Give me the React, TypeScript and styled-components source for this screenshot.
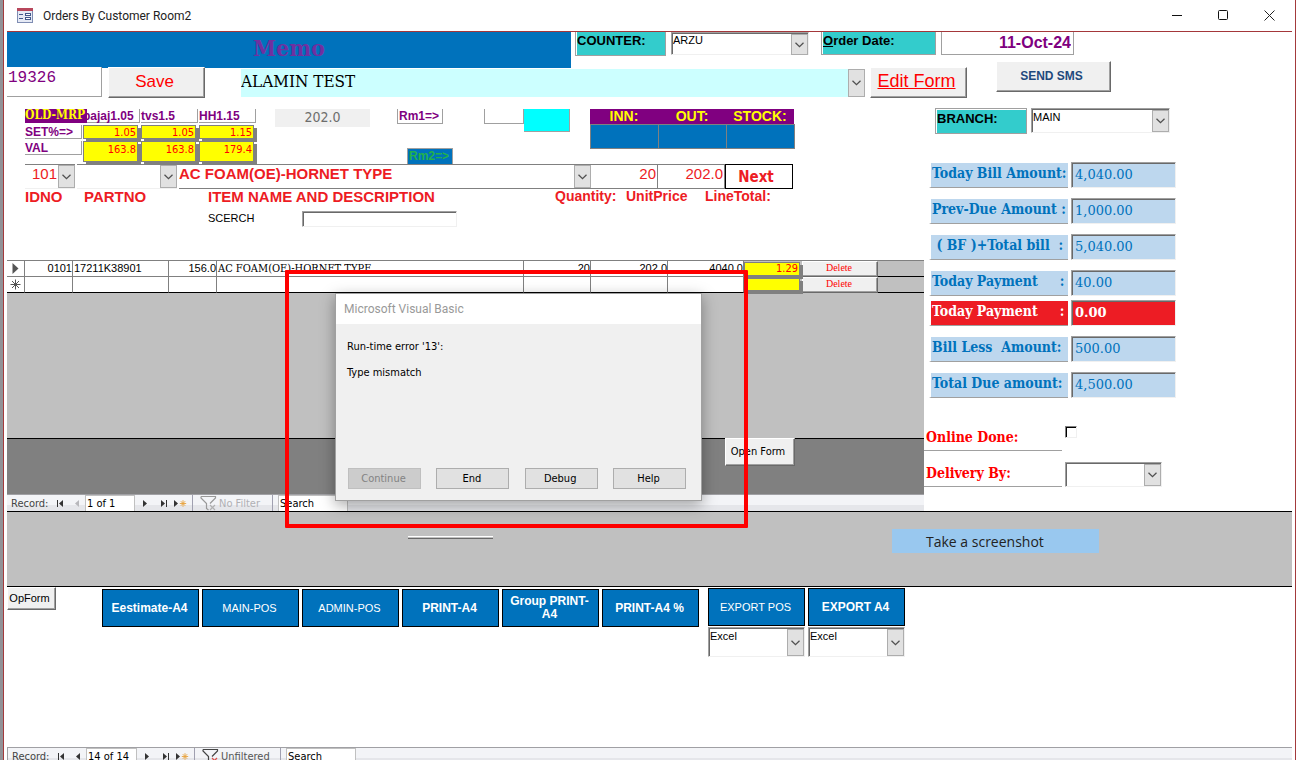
import React from "react";
import styled, { createGlobalStyle, css } from "styled-components";

const SANS = `"Liberation Sans", Arial, sans-serif`;
const TAHOMA = `"DejaVu Sans Condensed", "DejaVu Sans", Tahoma, sans-serif`;
const SEGOE = `"Open Sans", "Segoe UI", sans-serif`;
const CAPTION = `Roboto, "Segoe UI", sans-serif`;
const CAMBRIA = `"DejaVu Serif Condensed", "DejaVu Serif", Cambria, serif`;
const SERIF_WIDE = `"DejaVu Serif", Cambria, serif`;
const MONO = `"Liberation Mono", "Courier New", monospace`;

const BLUE = "#0072bc";
const PURPLE = "#800080";
const RED = "#ed1c24";
const TEAL = "#33cccc";

const GlobalStyle = createGlobalStyle`
  * { box-sizing: border-box; }
  html, body { margin: 0; background: #fff; overflow: hidden; }
  body { font-family: ${SANS}; font-size: 11px; color: #000; }
  button, input, select { font: inherit; color: inherit; margin: 0; border-radius: 0; }
  h1, p { margin: 0; font-weight: inherit; }
`;

/* ---------- window shell ---------- */

const Shell = styled.div`
  position: relative;
  min-height: 100vh;
  display: flex;
  flex-direction: column;
  background: #fff;
  border-left: 3px solid #929297;
  border-right: 1px solid #fff;
  padding: 0 4px;
  box-shadow: inset 1px 0 0 #a33a3c, inset -1px 0 0 #a33a3c;
`;

const TitleBar = styled.header`
  display: flex;
  align-items: center;
  height: 32px;
  padding: 0 11px 0 10px;
  border-bottom: 1px solid #a4373a;
  color: #222;
`;

const TitleText = styled.h1`
  flex: 1;
  margin-left: 10px;
  font: 12px ${CAPTION};
`;

const Caption = styled.button`
  width: 46px;
  height: 30px;
  padding: 0;
  border: 0;
  background: none;
  display: grid;
  place-items: center;
  &:last-child { width: 24px; }
  &:nth-last-child(2) { margin-right: 11px; }
`;

/* ---------- shared controls ---------- */

const sunken = css`
  border: 1px solid #f0f0f0;
  border-top-color: #a0a0a0;
  border-left-color: #a0a0a0;
  box-shadow: inset 1px 1px 0 #696969;
`;

const raised = css`
  background: #f0f0f0;
  border: 1px solid #fff;
  border-right-color: #696969;
  border-bottom-color: #696969;
  box-shadow: inset -1px -1px 0 #a0a0a0;
`;

const RaisedButton = styled.button<{ $w: number; $h: number; $size?: number; $color?: string; $bold?: boolean; $underline?: boolean; $tahoma?: boolean }>`
  ${raised}
  flex: none;
  width: ${p => p.$w}px;
  height: ${p => p.$h}px;
  padding: 0 4px 2px 0;
  white-space: nowrap;
  font-family: ${p => (p.$tahoma ? TAHOMA : SANS)};
  font-size: ${p => p.$size ?? 11}px;
  font-weight: ${p => (p.$bold ? "bold" : "normal")};
  color: ${p => p.$color ?? "#000"};
  text-decoration: ${p => (p.$underline ? "underline" : "none")};
`;

const ComboBox = styled.div<{ $w: number; $h: number; $flat?: boolean; $bg?: string; $lift?: number }>`
  flex: none;
  display: grid;
  width: ${p => p.$w}px;
  height: ${p => p.$h}px;
  padding: ${p => (p.$flat ? "0" : "1px 0 0 1px")};
  background: ${p => p.$bg ?? "#fff"};
  ${p => !p.$flat && sunken}
  > * { grid-area: 1 / 1; }
  select {
    appearance: none;
    min-width: 0;
    width: 100%;
    height: 100%;
    border: 0;
    outline: 0;
    background: transparent;
    padding: 0 18px ${p => p.$lift ?? 0}px 0;
  }
`;

const ComboArrow = styled.span`
  justify-self: end;
  width: 17px;
  height: 100%;
  display: grid;
  place-items: center;
  background: #e1e1e1;
  border: 1px solid #adadad;
  pointer-events: none;
`;

type ComboProps = { label: string; value: string; w: number; h: number; flat?: boolean; bg?: string; lift?: number; className?: string };

function Combo({ label, value, w, h, flat, bg, lift, className }: ComboProps) {
  return (
    <ComboBox $w={w} $h={h} $flat={flat} $bg={bg} $lift={lift} className={className}>
      <select aria-label={label} defaultValue={value}>
        <option value={value}>{value}</option>
      </select>
      <ComboArrow>
        <svg width="9" height="6" viewBox="0 0 9 6">
          <path d="M0.5 0.8 L4.5 4.6 L8.5 0.8" fill="none" stroke="#505050" strokeWidth="1.3" />
        </svg>
      </ComboArrow>
    </ComboBox>
  );
}

/* ---------- form header ---------- */

const TopRow = styled.div`
  display: flex;
  height: 36px;
  align-items: flex-start;
`;

const SecondRow = styled.div`
  display: flex;
  align-items: flex-end;
  height: 37px;
  margin-top: -7px;
`;

const Memo = styled.div`
  width: 564px;
  height: 36px;
  text-align: center;
  background: ${BLUE};
  color: #7030a0;
  font: bold 23px/31px ${CAMBRIA};
`;

const TealLabel = styled.label<{ $w: number; $h: number; $top?: boolean }>`
  flex: none;
  width: ${p => p.$w}px;
  height: ${p => p.$h}px;
  padding: ${p => (p.$top ? "1px" : "0")} 0 0 1px;
  background: ${TEAL};
  border: solid #a0a0a0;
  border-width: ${p => (p.$top ? "1px" : "0")} 1px 1px 1px;
  box-shadow: inset 1px ${p => (p.$top ? "1px" : "0")} 0 #fff;
  font-size: 13px;
  font-weight: bold;
  line-height: 18px;
`;

const CounterLabel = styled(TealLabel)`margin: 0 5px 0 4px;`;
const DateLabel = styled(TealLabel)`margin: 0 5px 0 12px;`;

const DateField = styled.input`
  width: 133px;
  height: 23px;
  padding: 0 2px 0 0;
  border: solid #a0a0a0;
  border-width: 0 1px 1px 1px;
  color: ${PURPLE};
  font-size: 16px;
  font-weight: bold;
  text-align: right;
`;

const MemoNo = styled.input`
  width: 95px;
  height: 30px;
  margin: 0 6px 1px 0;
  padding: 0 0 8px 1px;
  border: solid #a0a0a0;
  border-width: 0 1px 1px 0;
  color: ${PURPLE};
  font: 16px ${MONO};
`;

const CustomerCombo = styled(Combo)`
  margin: 0 5px 1px 36px;
  font: 17px ${CAMBRIA};
`;

const SmsSlot = styled.div`
  align-self: flex-start;
  margin-left: 29px;
`;

/* ---------- body columns ---------- */

const Body = styled.div`
  display: flex;
  align-items: stretch;
`;

const MainColumn = styled.div`
  flex: none;
  width: 917px;
  padding-top: 11px;
`;

const SideColumn = styled.div`
  flex: 1;
  padding-top: 10px;
`;

const Strip = styled.div`
  display: grid;
  grid-template-columns: 250px 122px 87px 106px 204px;
  align-items: start;
  height: 55px;
  margin-left: 18px;
`;

const RateGrid = styled.div`
  display: grid;
  grid-template-columns: repeat(4, 58px);
  grid-template-rows: 16px 16px 23px;
  color: ${PURPLE};
  font-size: 12px;
  font-weight: bold;
  line-height: 14px;
`;

const RateTag = styled.span`
  position: relative;
  z-index: 1;
  width: 62px;
  height: 14px;
  background: ${PURPLE};
  color: #ff0;
  white-space: nowrap;
  font: bold 12px/12px ${CAMBRIA};
`;

const RateLabel = styled.span`
  width: 57px;
  height: 14px;
  border: solid #a0a0a0;
  border-width: 0 1px 1px 0;
  white-space: nowrap;
`;

const YellowField = styled.input<{ $h: number; $w?: number }>`
  width: ${p => p.$w ?? 55}px;
  height: ${p => p.$h}px;
  padding: 0 1px ${p => (p.$h > 20 ? 4 : 0)}px 0;
  border: 1px solid #808080;
  box-shadow: 3px 3px 0 #808080;
  background: #ff0;
  color: #f00;
  text-align: right;
  font: 11px ${TAHOMA};
`;

const GreyReadout = styled.output`
  width: 95px;
  height: 18px;
  background: #f0f0f0;
  color: #6d6d6d;
  text-align: center;
  font: 14px/17px ${TAHOMA};
`;

const RoomColumn = styled.div`
  display: flex;
  flex-direction: column;
  gap: 24px;
`;

const RoomTag = styled.span<{ $filled?: boolean }>`
  width: 46px;
  height: ${p => (p.$filled ? 17 : 15)}px;
  margin-left: ${p => (p.$filled ? 10 : 0)}px;
  padding-left: 1px;
  border: solid #a0a0a0;
  border-width: ${p => (p.$filled ? "1px" : "0")} 1px 1px 1px;
  background: ${p => (p.$filled ? BLUE : "#fff")};
  color: ${p => (p.$filled ? "#22b14c" : PURPLE)};
  font-size: 12px;
  font-weight: bold;
  line-height: 14px;
  white-space: nowrap;
`;

const SwatchPair = styled.div`display: flex;`;

const EmptyBox = styled.input`
  width: 40px;
  height: 15px;
  padding: 0;
  border: solid #a0a0a0;
  border-width: 0 1px 1px 1px;
`;

const CyanBox = styled.input`
  width: 46px;
  height: 23px;
  padding: 0;
  border: solid #a0a0a0;
  border-width: 0 1px 1px 0;
  background: #0ff;
`;

const StockGrid = styled.div`
  display: grid;
  grid-template-columns: repeat(3, 68px);
  grid-template-rows: 15px 25px;
`;

const StockHead = styled.label`
  background: ${PURPLE};
  color: #ff0;
  text-align: center;
  font-size: 14px;
  font-weight: bold;
  line-height: 15px;
`;

const StockValue = styled.input`
  width: 69px;
  height: 25px;
  padding: 0;
  background: ${BLUE};
  border: 1px solid #808080;
`;

const EntryRow = styled.div`
  display: grid;
  grid-template-columns: 52px 102px 412px 67px 67px 68px;
  height: 25px;
  margin-left: 18px;
  color: ${RED};
  font-size: 15px;
`;

const EntryCombo = styled(Combo)<{ $right?: boolean; $strong?: boolean }>`
  border: solid #808080;
  border-width: 1px 0 1px 0;
  border-bottom-color: ${p => (p.$strong ? "#808080" : "#f0f0f0")};
  select {
    text-align-last: ${p => (p.$right ? "right" : "left")};
    font-weight: ${p => (p.$strong ? "bold" : "normal")};
  }
`;

const EntryInput = styled.input`
  width: 67px;
  height: 25px;
  padding: 0 1px 6px;
  border: solid #808080;
  border-width: 1px 1px 1px 0;
  text-align: right;
`;

const NextButton = styled.button`
  width: 68px;
  height: 25px;
  padding: 0 6px 0 0;
  background: #fff;
  border: 1px solid #000;
  font: bold 15px ${TAHOMA};
`;

const EntryLabels = styled.div`
  display: grid;
  grid-template-columns: 59px 124px 347px 71px 79px 80px;
  height: 22px;
  margin-left: 18px;
  color: ${RED};
  font-weight: bold;
  line-height: 15px;
  white-space: nowrap;
`;

const EntryLabel = styled.span<{ $large?: boolean }>`
  font-size: ${p => (p.$large ? 15 : 14)}px;
`;

const SearchRow = styled.div`
  display: flex;
  height: 49px;
  margin-left: 201px;
  line-height: 15px;
  label { width: 94px; }
`;

const SunkenInput = styled.input`
  ${sunken}
  width: 155px;
  height: 16px;
  padding: 0 2px;
`;

/* ---------- order lines subform ---------- */

const Lines = styled.table`
  width: 917px;
  table-layout: fixed;
  border-collapse: separate;
  border-spacing: 0;
  background: #fff;
  border-top: 1px solid #808080;
  td {
    height: 16px;
    padding: 0 1px;
    border-right: 1px solid #808080;
    border-bottom: 1px solid #808080;
    line-height: 15px;
    vertical-align: top;
    white-space: nowrap;
  }
  tr:last-child td { border-bottom-color: #000; }
`;

const NumCell = styled.td`
  &&& { padding-right: 0; }
  text-align: right;
`;
const NameCell = styled.td`font: 11px ${CAMBRIA};`;
const SelectorCell = styled.td`
  svg { display: block; margin: 2px auto 0; }
`;
const TightCell = styled.td`&&& { padding: 0; border: 0; background: #c0c0c0; }`;
const FillerCell = styled.td`background: #c0c0c0; &&& { border-right: 0; border-bottom-color: #000; }`;

const DeleteButton = styled.button`
  ${raised}
  display: block;
  width: 76px;
  height: 16px;
  padding: 0 2px 2px 0;
  color: #f00;
  font: 10px/12px "Liberation Serif", serif;
`;

const DetailArea = styled.div`
  height: 145px;
  background: #c0c0c0;
`;

const DetailFooter = styled.div`
  display: flex;
  height: 56px;
  padding-left: 718px;
  background: #808080;
  box-shadow: inset 0 1px 0 #000;
`;

/* ---------- record navigation ---------- */

const NavBar = styled.nav<{ $wide?: boolean }>`
  display: flex;
  flex: none;
  height: 17px;
  padding-left: 4px;
  background: linear-gradient(#f3f4f7 0 10px, #e5e6ea 10px);
  border-top: 1px solid #a0a0a4;
  border-left: ${p => (p.$wide ? "1px solid #a0a0a4" : "0")};
  font: 11px/18px ${TAHOMA};
  color: #444;
`;

const NavLabel = styled.span`width: 41px;`;

const NavButton = styled.button<{ $w: number }>`
  width: ${p => p.$w}px;
  padding: 0;
  border: 0;
  background: none;
  display: grid;
  place-items: center;
`;

const NavInput = styled.input<{ $w: number }>`
  width: ${p => p.$w}px;
  height: 16px;
  padding: 0 1px;
  border: solid #c0c0c0;
  border-width: 1px 1px 0 1px;
  color: #000;
  &::placeholder { color: #000; opacity: 1; }
`;

const NavRule = styled.i`
  width: 1px;
  margin: 0 5px 0 3px;
  background: #a0a0b0;
`;

const NavFilter = styled.button<{ $muted: boolean }>`
  display: flex;
  gap: 2px;
  width: ${p => (p.$muted ? 71 : 77)}px;
  padding: 0 0 0 2px;
  border: 0;
  background: none;
  line-height: 18px;
  white-space: nowrap;
  color: ${p => (p.$muted ? "#b0b0b4" : "#555")};
`;

function Tri({ flip, bar, star, dim }: { flip?: boolean; bar?: boolean; star?: boolean; dim?: boolean }) {
  const c = dim ? "#b8b8bc" : "#333";
  return (
    <svg width={star ? 14 : 8} height="9" viewBox={star ? "0 0 14 9" : "0 0 8 9"}>
      <g transform={flip ? "translate(8 0) scale(-1 1)" : undefined}>
        <path d="M1 1 L5 4.5 L1 8 Z" fill={c} />
        {bar && <path d="M6.5 1 V8" stroke={c} />}
      </g>
      {star && <path d="M10 1.2 V7.8 M6.8 4.5 H13.2 M7.8 2.2 L12.2 6.8 M12.2 2.2 L7.8 6.8" stroke="#e8a33d" strokeWidth="0.9" />}
    </svg>
  );
}

function RecordNav({ position, filter, muted, wide }: { position: string; filter: string; muted: boolean; wide?: boolean }) {
  return (
    <NavBar $wide={wide} aria-label="Record navigation">
      <NavLabel>Record:</NavLabel>
      <NavButton $w={15} aria-label="First record"><Tri flip bar /></NavButton>
      <NavButton $w={18} aria-label="Previous record"><Tri flip dim={!wide} /></NavButton>
      <NavInput $w={wide ? 51 : 50} aria-label="Current record" defaultValue={position} />
      <NavButton $w={22} aria-label="Next record"><Tri /></NavButton>
      <NavButton $w={13} aria-label="Last record"><Tri bar /></NavButton>
      <NavButton $w={19} aria-label="New record"><Tri star /></NavButton>
      <NavRule />
      <NavFilter $muted={muted}>
        <svg width="17" height="16" viewBox="0 0 17 16">
          <path d="M1 1.5 H15.5 V3 L10 8.5 M1 1.5 V3 L6.5 8.5 V13.5 L8.5 15" fill="none" stroke={muted ? "#999" : "#444"} strokeWidth="1.2" />
          <path d="M10 10 L15 15 M15 10 L10 15" stroke={muted ? "#b0b0b0" : "#d9534f"} strokeWidth="1.2" />
        </svg>
        {filter}
      </NavFilter>
      <NavRule />
      <NavInput $w={70} aria-label="Search records" placeholder="Search" />
    </NavBar>
  );
}

/* ---------- side totals ---------- */

const BranchRow = styled.div`
  display: flex;
  gap: 4px;
  height: 54px;
  padding-left: 11px;
`;

const TotalRow = styled.div<{ $alert?: boolean; $short?: boolean }>`
  display: grid;
  grid-template-columns: 139px 105px;
  column-gap: 3px;
  align-items: start;
  height: ${p => (p.$short ? 30 : 36)}px;
  margin-left: 5px;
  color: ${p => (p.$alert ? "#fff" : BLUE)};
  --fill: ${p => (p.$alert ? RED : "#bdd7ee")};
`;

const TotalLabel = styled.label`
  height: 25px;
  margin-top: 1px;
  padding-left: 1px;
  border-bottom: 1px solid #a0a0a0;
  border-left: 2px solid #fff;
  background: var(--fill);
  font: bold 14px/21px ${CAMBRIA};
  white-space: pre;
`;

const TotalField = styled.input<{ $alert?: boolean }>`
  ${sunken}
  width: 105px;
  height: 26px;
  padding: 0 3px 1px;
  background: var(--fill);
  font: ${p => (p.$alert ? "bold " : "")}13px ${SERIF_WIDE};
`;

const ExtraRow = styled.div`
  display: flex;
  gap: 3px;
  height: 36px;
`;

const ExtraLabel = styled.label`
  width: 138px;
  height: 25px;
  padding-left: 2px;
  border-bottom: 1px solid #a0a0a0;
  color: #f00;
  font: bold 14px/23px ${CAMBRIA};
`;

const Extras = styled.div`margin-top: 18px;`;

const Tick = styled.input`
  appearance: none;
  width: 12px;
  height: 12px;
  border: 1px solid #f0f0f0;
  border-top-color: #808080;
  border-left-color: #808080;
  box-shadow: inset 1px 1px 0 #000;
`;

/* ---------- bottom bands ---------- */

const Band = styled.div`
  display: flex;
  justify-content: flex-start;
  align-items: flex-start;
  height: 76px;
  padding: 17px 0 0 400px;
  background: #c0c0c0;
  border: solid #000;
  border-width: 1px 0;
`;

const BandRule = styled.hr`
  width: 85px;
  height: 3px;
  margin: 7px 399px 0 1px;
  border: solid #fff;
  border-width: 1px 0 0;
  border-bottom: 1px solid #696969;
`;

const Snip = styled.button`
  width: 207px;
  height: 24px;
  padding: 0 0 0 34px;
  border: 0;
  background: #99c8ef;
  color: #222;
  text-align: left;
  font: 14px ${SEGOE};
`;

const Footer = styled.footer`
  flex: 1 0 160px;
  display: flex;
  align-items: flex-start;
`;

const PrintGroup = styled.div`
  display: flex;
  gap: 3px;
  padding-top: 2px;
  margin: 0 9px 0 46px;
`;

const ExportGroup = styled.div`
  display: flex;
  gap: 3px;
  padding-top: 1px;
`;

const ExportColumn = styled.div`
  display: grid;
  gap: 1px;
`;

const BlueButton = styled.button<{ $bold?: boolean }>`
  width: 97px;
  height: 38px;
  padding: 0 5px 0 3px;
  background: ${BLUE};
  border: 1px solid #000;
  color: #fff;
  font-size: ${p => (p.$bold ? 12 : 11)}px;
  font-weight: ${p => (p.$bold ? "bold" : "normal")};
  line-height: 13px;
`;

/* ---------- floating pieces ---------- */

const Highlight = styled.div`
  position: absolute;
  left: 282px;
  top: 270px;
  width: 463px;
  height: 258px;
  border: 4px solid #f00;
  border-radius: 1px;
  pointer-events: none;
`;

const Dialog = styled.div`
  position: absolute;
  left: 332px;
  top: 293px;
  width: 367px;
  background: #f0f0f0;
  border: 1px solid #a0a0a0;
  box-shadow: 0 4px 14px rgba(0, 0, 0, 0.35);
  font: 11px/16px ${TAHOMA};
`;

const DialogTitle = styled.div`
  height: 30px;
  padding-left: 8px;
  background: #fff;
  color: #999;
  font: 12px/30px ${CAPTION};
`;

const DialogBody = styled.div`
  display: grid;
  gap: 10px;
  height: 144px;
  align-content: start;
  padding: 15px 11px 0;
`;

const DialogActions = styled.div`
  display: flex;
  justify-content: space-between;
  padding: 0 15px 11px 12px;
`;

const DialogButton = styled.button`
  width: 73px;
  height: 21px;
  padding: 0 2px 0 0;
  background: #e1e1e1;
  border: 1px solid #adadad;
  &:disabled { background: #ccc; border-color: #bfbfbf; color: #838383; }
`;

/* ---------- data ---------- */

const rates = [
  { name: "bajaj1.05", set: "1.05", val: "163.8" },
  { name: "tvs1.5", set: "1.05", val: "163.8" },
  { name: "HH1.15", set: "1.15", val: "179.4" },
];

const totals = [
  { label: "Today Bill Amount:", value: "4,040.00" },
  { label: "Prev-Due Amount :", value: "1,000.00" },
  { label: " ( BF )+Total bill  :", value: "5,040.00" },
  { label: "Today Payment     :", value: "40.00", short: true },
  { label: "Today Payment     :", value: "0.00", alert: true },
  { label: "Bill Less  Amount:", value: "500.00" },
  { label: "Total Due amount:", value: "4,500.00" },
];

const prints = [
  { label: "Eestimate-A4", bold: true },
  { label: "MAIN-POS" },
  { label: "ADMIN-POS" },
  { label: "PRINT-A4", bold: true },
  { label: "Group PRINT-A4", bold: true },
  { label: "PRINT-A4 %", bold: true },
];

const exportsList = [{ label: "EXPORT POS" }, { label: "EXPORT A4", bold: true }];

const columnWidths = [18, 48, 96, 48, 307, 67, 77, 76, 58, 76, 46];

export default function App() {
  return (
    <>
      <GlobalStyle />
      <Shell>
        <TitleBar>
          <svg width="16" height="15" viewBox="0 0 16 15">
            <rect x="0.5" y="0.5" width="15" height="14" fill="#e6eaf5" stroke="#7f8db3" />
            <rect x="0" y="0" width="16" height="3" fill="#b8475c" />
            <path d="M2 6.5 H6 M2 10.5 H6" stroke="#44598c" />
            <rect x="8.5" y="5.5" width="5" height="2" fill="#fff" stroke="#44598c" />
            <rect x="8.5" y="9.5" width="5" height="2" fill="#fff" stroke="#44598c" />
          </svg>
          <TitleText>Orders By Customer Room2</TitleText>
          <Caption aria-label="Minimize">
            <svg width="11" height="11"><path d="M0 5.5 H10" stroke="#111" /></svg>
          </Caption>
          <Caption aria-label="Maximize">
            <svg width="11" height="11"><rect x="0.5" y="0.5" width="9" height="9" rx="1" fill="none" stroke="#111" /></svg>
          </Caption>
          <Caption aria-label="Close">
            <svg width="11" height="11"><path d="M0.5 0.5 L10.5 10.5 M10.5 0.5 L0.5 10.5" stroke="#222" /></svg>
          </Caption>
        </TitleBar>

        <TopRow>
          <Memo>Memo</Memo>
          <CounterLabel $w={91} $h={24}>COUNTER:</CounterLabel>
          <Combo label="Counter" value="ARZU" w={138} h={23} lift={9} />
          <DateLabel htmlFor="orderDate" $w={115} $h={23}><u>O</u>rder Date:</DateLabel>
          <DateField id="orderDate" defaultValue="11-Oct-24" />
        </TopRow>
        <SecondRow>
          <MemoNo aria-label="Memo number" defaultValue="19326" />
          <RaisedButton $w={97} $h={31} $size={17} $color="#f00">Save</RaisedButton>
          <CustomerCombo label="Customer" value="ALAMIN TEST" w={624} h={28} flat bg="#ccffff" lift={4} />
          <RaisedButton $w={97} $h={31} $size={18} $color="#f00" $underline>Edit Form</RaisedButton>
          <SmsSlot>
            <RaisedButton $w={115} $h={31} $size={12} $color="#1f497d" $bold>SEND SMS</RaisedButton>
          </SmsSlot>
        </SecondRow>

        <Body>
          <MainColumn>
            <Strip>
              <RateGrid>
                <RateTag>OLD-MRP</RateTag>
                {rates.map(r => <RateLabel key={r.name}>{r.name}</RateLabel>)}
                <RateLabel>SET%=&gt;</RateLabel>
                {rates.map(r => <YellowField key={r.name} aria-label={`${r.name} rate`} $h={14} defaultValue={r.set} />)}
                <RateLabel>VAL</RateLabel>
                {rates.map(r => <YellowField key={r.name} aria-label={`${r.name} value`} $h={21} defaultValue={r.val} />)}
              </RateGrid>
              <GreyReadout>202.0</GreyReadout>
              <RoomColumn>
                <RoomTag>Rm1=&gt;</RoomTag>
                <RoomTag $filled>Rm2=&gt;</RoomTag>
              </RoomColumn>
              <SwatchPair>
                <EmptyBox aria-label="Room 1 quantity" />
                <CyanBox aria-label="Room 1 total" />
              </SwatchPair>
              <StockGrid>
                <StockHead htmlFor="inn">INN:</StockHead>
                <StockHead htmlFor="out">OUT:</StockHead>
                <StockHead htmlFor="stock">STOCK:</StockHead>
                <StockValue id="inn" />
                <StockValue id="out" />
                <StockValue id="stock" />
              </StockGrid>
            </Strip>

            <EntryRow>
              <EntryCombo label="Id" value="101" w={50} h={25} flat lift={6} $right />
              <EntryCombo label="Part number" value="" w={100} h={25} flat />
              <EntryCombo label="Item" value="AC FOAM(OE)-HORNET TYPE" w={412} h={25} flat lift={6} $strong />
              <EntryInput aria-label="Quantity" defaultValue="20" />
              <EntryInput aria-label="Unit price" defaultValue="202.0" />
              <NextButton>Next</NextButton>
            </EntryRow>
            <EntryLabels>
              <EntryLabel $large>IDNO</EntryLabel>
              <EntryLabel $large>PARTNO</EntryLabel>
              <EntryLabel $large>ITEM NAME AND DESCRIPTION</EntryLabel>
              <EntryLabel>Quantity:</EntryLabel>
              <EntryLabel>UnitPrice</EntryLabel>
              <EntryLabel>LineTotal:</EntryLabel>
            </EntryLabels>
            <SearchRow>
              <label htmlFor="scerch">SCERCH</label>
              <SunkenInput id="scerch" />
            </SearchRow>

            <Lines>
              <colgroup>
                {columnWidths.map((w, i) => <col key={i} width={w} />)}
              </colgroup>
              <tbody>
                <tr>
                  <SelectorCell>
                    <svg width="7" height="11" viewBox="0 0 7 11"><path d="M0.5 0 L6.5 5.5 L0.5 11 Z" fill="#555" /></svg>
                  </SelectorCell>
                  <NumCell>0101</NumCell>
                  <td>17211K38901</td>
                  <NumCell>156.0</NumCell>
                  <NameCell>AC FOAM(OE)-HORNET TYPE</NameCell>
                  <NumCell>20</NumCell>
                  <NumCell>202.0</NumCell>
                  <NumCell>4040.0</NumCell>
                  <TightCell><YellowField aria-label="Margin" $h={14} $w={56} defaultValue="1.29" /></TightCell>
                  <TightCell><DeleteButton>Delete</DeleteButton></TightCell>
                  <FillerCell />
                </tr>
                <tr>
                  <SelectorCell>
                    <svg width="11" height="11" viewBox="0 0 11 11"><path d="M5.5 0.5 V10.5 M0.5 5.5 H10.5 M2 2 L9 9 M9 2 L2 9" stroke="#555" /></svg>
                  </SelectorCell>
                  <NumCell />
                  <td />
                  <NumCell />
                  <NameCell />
                  <NumCell />
                  <NumCell />
                  <NumCell />
                  <TightCell><YellowField aria-label="New margin" $h={13} $w={56} /></TightCell>
                  <TightCell><DeleteButton>Delete</DeleteButton></TightCell>
                  <FillerCell />
                </tr>
              </tbody>
            </Lines>
            <DetailArea />
            <DetailFooter>
              <RaisedButton $w={70} $h={28} $tahoma>Open Form</RaisedButton>
            </DetailFooter>
            <RecordNav position="1 of 1" filter="No Filter" muted />
          </MainColumn>

          <SideColumn>
            <BranchRow>
              <TealLabel $w={92} $h={26} $top>BRANCH:</TealLabel>
              <Combo label="Branch" value="MAIN" w={139} h={25} lift={9} />
            </BranchRow>
            {totals.map((t, i) => (
              <TotalRow key={i} $alert={t.alert} $short={t.short}>
                <TotalLabel htmlFor={`total${i}`}>{t.label}</TotalLabel>
                <TotalField id={`total${i}`} $alert={t.alert} defaultValue={t.value} />
              </TotalRow>
            ))}
            <Extras>
              <ExtraRow>
                <ExtraLabel htmlFor="online">Online Done:</ExtraLabel>
                <Tick id="online" type="checkbox" />
              </ExtraRow>
              <ExtraRow>
                <ExtraLabel>Delivery By:</ExtraLabel>
                <Combo label="Delivery by" value="" w={97} h={25} />
              </ExtraRow>
            </Extras>
          </SideColumn>
        </Body>

        <Band>
          <BandRule />
          <Snip>Take a screenshot</Snip>
        </Band>

        <Footer>
          <RaisedButton $w={49} $h={23}>OpForm</RaisedButton>
          <PrintGroup>
            {prints.map(b => <BlueButton key={b.label} $bold={b.bold}>{b.label}</BlueButton>)}
          </PrintGroup>
          <ExportGroup>
            {exportsList.map(b => (
              <ExportColumn key={b.label}>
                <BlueButton $bold={b.bold}>{b.label}</BlueButton>
                <Combo label={`${b.label} format`} value="Excel" w={97} h={30} lift={13} />
              </ExportColumn>
            ))}
          </ExportGroup>
        </Footer>
        <RecordNav position="14 of 14" filter="Unfiltered" muted={false} wide />

        <Dialog role="dialog" aria-label="Microsoft Visual Basic">
          <DialogTitle>Microsoft Visual Basic</DialogTitle>
          <DialogBody>
            <p>Run-time error '13':</p>
            <p>Type mismatch</p>
          </DialogBody>
          <DialogActions>
            <DialogButton disabled>Continue</DialogButton>
            <DialogButton>End</DialogButton>
            <DialogButton>Debug</DialogButton>
            <DialogButton>Help</DialogButton>
          </DialogActions>
        </Dialog>
        <Highlight />
      </Shell>
    </>
  );
}
